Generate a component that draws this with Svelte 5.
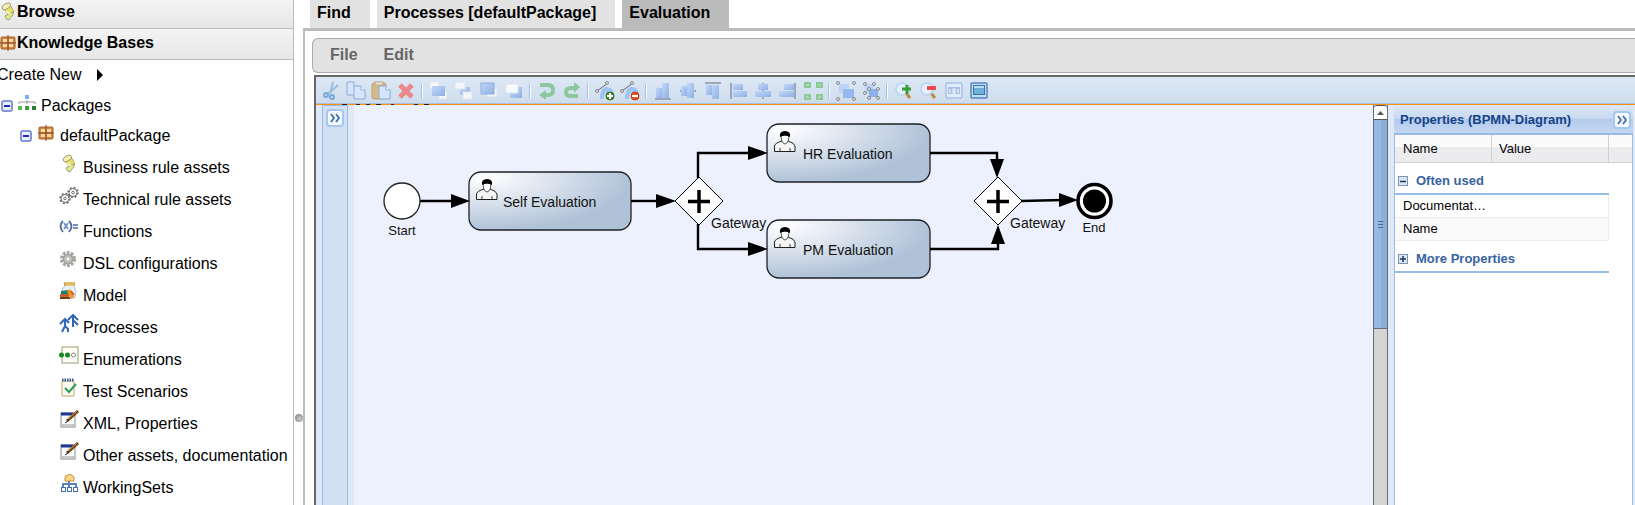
<script>
  const assets = [
    ['scroll', 'Business rule assets'],
    ['gears', 'Technical rule assets'],
    ['func', 'Functions'],
    ['gear', 'DSL configurations'],
    ['model', 'Model'],
    ['process', 'Processes'],
    ['enum', 'Enumerations'],
    ['test', 'Test Scenarios'],
    ['edit', 'XML, Properties'],
    ['edit', 'Other assets, documentation'],
    ['sets', 'WorkingSets']
  ];

  const tools = [
    ['Cut', 'Copy', 'Paste', 'Delete'],
    ['Bring to front', 'Bring forward', 'Send backward', 'Send to back'],
    ['Undo', 'Redo'],
    ['Add docker', 'Delete docker'],
    ['Align bottom', 'Align middle', 'Align top', 'Align left', 'Align center', 'Align right', 'Same size'],
    ['Group', 'Ungroup'],
    ['Zoom in', 'Zoom out', 'Zoom to standard', 'Zoom to fit']
  ];

  const tasks = [
    { x: 469, y: 172, label: 'Self Evaluation', tx: 503 },
    { x: 767, y: 124, label: 'HR Evaluation', tx: 803 },
    { x: 767, y: 220, label: 'PM Evaluation', tx: 803 }
  ];

  const flows = [
    { line: 'M420 201H456', tip: 'M451 194L470 201L451 208Z' },
    { line: 'M631 201H662', tip: 'M656 194L676 201L656 208Z' },
    { line: 'M698 178V153H754', tip: 'M748 146L768 153L748 160Z' },
    { line: 'M698 224V249H754', tip: 'M748 242L768 249L748 256Z' },
    { line: 'M930 153H997V164', tip: 'M990 159H1004L997 178Z' },
    { line: 'M930 249H998V240', tip: 'M991 244H1005L998 225Z' },
    { line: 'M1020 201L1064 200', tip: 'M1059 193L1078 200L1059 207Z' }
  ];

  const gateways = [699, 998];
</script>

{#snippet scroll()}
  <path d="M6 7L12 3L16 10L11 14Z" fill="#e9df62" stroke="#b5ab50" />
  <path d="M4 5Q6 1 11 1Q14 2 12 5L7 8Q4 8 4 5Z" fill="#f6f0b0" stroke="#9c9c78" />
  <path d="M7 14L15 10Q16 13 13 15L11 18Q8 18 7 14Z" fill="#f1e878" stroke="#88a59c" />
  <path d="M8 9L12 12" stroke="#fbf8c0" stroke-width="2" />
{/snippet}

{#snippet assetIcon(name)}
  <svg class="asset-icon" width="20" height="20" viewBox="0 0 20 20" aria-hidden="true">
    {#if name === 'scroll'}
      {@render scroll()}
    {:else if name === 'gears'}
      <g fill="none" stroke="#6c6c6c">
        <circle cx="6" cy="12.500" r="5" stroke-width="1.500" stroke-dasharray="2 1.900" />
        <circle cx="6" cy="12.500" r="4" />
        <circle cx="6" cy="12.500" r="1.300" />
        <circle cx="14" cy="6.500" r="5" stroke-width="1.500" stroke-dasharray="2 1.900" />
        <circle cx="14" cy="6.500" r="4" />
        <circle cx="14" cy="6.500" r="1.300" />
      </g>
    {:else if name === 'func'}
      <g fill="none" stroke="#4e6b9c" stroke-width="1.800">
        <path d="M4 3Q-1 8 4 14M10 3Q15 8 10 14" />
        <path d="M5 5L9 11M9 5L5 11" stroke="#6f91c4" />
        <path d="M14 7H19M14 10H19" stroke-width="1.500" />
      </g>
    {:else if name === 'gear'}
      <g fill="none" stroke="#a3a49e">
        <circle cx="9" cy="9" r="6.500" stroke-width="3" stroke-dasharray="2.700 1.400" />
        <circle cx="9" cy="9" r="4.500" fill="#dedfd8" stroke-width="2" />
        <rect x="7" y="7" width="4" height="4" fill="#fff" />
      </g>
    {:else if name === 'model'}
      <path d="M5 1H15V4Q18 9 16 16H10L3 9Q3 6 6 4Z" fill="#e8f2fc" stroke="#a9c4e2" />
      <path d="M5 2H16" stroke="#d79a22" stroke-width="3" />
      <path d="M6 2H15" stroke="#fbe08b" />
      <path d="M2 9L9 8V12H2Z" fill="#17806f" /><path d="M1 12H10V15H1Z" fill="#c95e28" /><path d="M1 15H11V17H1Z" fill="#713d19" />
      <path d="M8 9L11 7L15 15L12 17Z" fill="#f0941f" /><path d="M12 9L15 13" stroke="#cf6112" stroke-width="2" />
    {:else if name === 'process'}
      <g fill="none" stroke="#3167b8" stroke-width="2">
        <path d="M6 6V13M1 10L6 5L10 9M6 12L3 18M6 12L9 15V18" />
        <path d="M14 1V9M9 6L14 1L19 6M14 7V13M14 6L19 11" />
      </g>
    {:else if name === 'enum'}
      <rect x="3" y="1" width="16" height="16" fill="#fdfdf6" stroke="#9c9a77" />
      <circle cx="2.500" cy="9" r="2.500" fill="#178a20" /><circle cx="8.500" cy="9" r="2.500" fill="#178a20" />
      <circle cx="14.500" cy="9" r="2" fill="#fff" stroke="#858585" />
    {:else if name === 'test'}
      <rect x="3" y="3" width="12" height="15" rx="1" fill="#fdfbf0" stroke="#c2a264" />
      <path d="M3 2H15" stroke="#345a9e" stroke-width="3" stroke-dasharray="1.500 1" />
      <path d="M6 10L10 14L17 6" fill="none" stroke="#2c9d59" stroke-width="2" />
    {:else if name === 'edit'}
      <rect x="2" y="3" width="14" height="14" fill="#f7f9fb" stroke="#8d8e83" />
      <path d="M2 4H14" stroke="#1c3796" stroke-width="3" />
      <path d="M3 15H15" stroke="#c3cad0" stroke-width="2" />
      <path d="M8 11L19 1" stroke="#6d3f13" stroke-width="3" /><path d="M9 9L18 1" stroke="#e6a045" /><path d="M6 13L9 11" stroke="#222" />
    {:else if name === 'sets'}
      <path d="M6 4Q6 1 9 1L11 0L15 3V7H6Z" fill="#fbd58a" stroke="#d08f38" />
      <path d="M10 7V13M4 13V10H17V13" fill="none" stroke="#5b84bd" stroke-width="2" />
      <g fill="#fff" stroke="#426fae"><rect x="2.500" y="13.500" width="4" height="4" /><rect x="8.500" y="13.500" width="4" height="4" /><rect x="14.500" y="13.500" width="4" height="4" /></g>
    {/if}
  </svg>
{/snippet}

{#snippet crate()}
  <svg width="16" height="16" viewBox="0 0 16 16" aria-hidden="true">
    <rect x="1" y="2" width="14" height="12" rx="1" fill="#d5863f" stroke="#a3602c" />
    <path d="M3 4H7V7H3ZM9 4H13V7H9ZM3 9H7V12H3ZM9 9H13V12H9Z" fill="#fbd9a5" />
    <path d="M8 0V16M0 8H16" stroke="#7c4a2c" />
  </svg>
{/snippet}

{#snippet minus()}
  <svg width="12" height="12" viewBox="0 0 12 12" aria-hidden="true">
    <rect x="1" y="1" width="10" height="10" rx="2" fill="#e9effc" stroke="#8497d6" stroke-width="2" />
    <path d="M3 6H9" stroke="#2626bd" stroke-width="2" />
  </svg>
{/snippet}

{#snippet doc(x, y)}
  <path d="M{x} {y}H{x + 7}L{x + 11} {y + 4}V{y + 13}H{x}Z" fill="#d6e5fa" stroke="#8badde" />
  <path d="M{x + 7} {y}V{y + 4}H{x + 11}" fill="#fff" stroke="#8badde" />
{/snippet}

{#snippet dot(x, y)}
  <circle cx={x} cy={y} r="1.500" fill="#e4e4e4" stroke="#888" />
{/snippet}

{#snippet toolIcon(name)}
  <svg width="20" height="20" viewBox="0 0 20 20" aria-hidden="true">
    <defs>
      <linearGradient id="blu" x1="0" y1="0" x2="1" y2="1"><stop offset="0" stop-color="#c3d8f7" /><stop offset="1" stop-color="#8eafe6" /></linearGradient>
    </defs>
    {#if name === 'Cut'}
      <path d="M12 1L9 13M17 4L7 13" stroke="#98bbdc" stroke-width="2" />
      <g fill="none" stroke="#79a9d8" stroke-width="2"><circle cx="5" cy="14" r="2" /><circle cx="11" cy="16" r="2" /></g>
    {:else if name === 'Copy'}
      {@render doc(1, 1)}{@render doc(8, 5)}
    {:else if name === 'Paste'}
      <rect x="1" y="2" width="14" height="16" rx="2" fill="#d6b988" stroke="#c0a06c" />
      <rect x="4" y="1" width="8" height="3" fill="#f2e8cf" stroke="#b9a680" />
      {@render doc(8, 5)}
    {:else if name === 'Delete'}
      <path d="M4 4L16 16M16 4L4 16" stroke="#ea8989" stroke-width="5" />
    {:else if name === 'Bring to front'}
      <rect x="1" y="1" width="9" height="7" fill="#f4f6fa" stroke="#dde4ee" /><rect x="10" y="11" width="8" height="7" fill="#f4f6fa" stroke="#dde4ee" />
      <rect x="3" y="5" width="13" height="10" fill="url(#blu)" />
    {:else if name === 'Bring forward'}
      <rect x="6" y="6" width="10" height="8" fill="url(#blu)" />
      <rect x="1" y="1" width="10" height="7" fill="#f4f6fa" stroke="#dde4ee" /><rect x="9" y="11" width="9" height="7" fill="#f4f6fa" stroke="#dde4ee" />
    {:else if name === 'Send backward'}
      <rect x="8" y="8" width="10" height="8" fill="#f4f6fa" stroke="#dde4ee" /><rect x="2" y="2" width="13" height="11" fill="url(#blu)" stroke="#8faee0" />
    {:else if name === 'Send to back'}
      <rect x="6" y="6" width="12" height="11" fill="url(#blu)" /><rect x="2" y="3" width="12" height="9" fill="#f8f9fb" stroke="#dde4ee" />
    {:else if name === 'Undo'}
      <path d="M3 4H11Q16 4 16 9Q16 14 11 14H7" fill="none" stroke="#8cc79e" stroke-width="4" /><path d="M9 9V19L2 14Z" fill="#8cc79e" />
    {:else if name === 'Redo'}
      <path d="M16 15H9Q4 15 4 11Q4 7 9 7H12" fill="none" stroke="#8cc79e" stroke-width="4" /><path d="M12 1V12L18 6Z" fill="#8cc79e" />
    {:else if name === 'Add docker' || name === 'Delete docker'}
      <path d="M5 18Q5 8 10 6Q17 5 19 12V17H13Q14 12 12 11Q9 12 9 18Z" fill="#9dc5f4" />
      <path d="M2 10L13 2" stroke="#666" />
      {@render dot(2, 10)}{@render dot(12, 2)}
      <circle cx="15" cy="15" r="4" fill={name === 'Add docker' ? '#49892b' : '#e05420'} stroke={name === 'Add docker' ? '#356e1b' : '#c03d10'} />
      <path d={name === 'Add docker' ? 'M12 15H18M15 12V18' : 'M12 15H18'} stroke="#fff" stroke-width="2" />
    {:else if name === 'Align bottom'}
      <path d="M2 18H18" stroke="#9ba6b8" stroke-width="2" /><rect x="3" y="7" width="6" height="10" fill="url(#blu)" /><rect x="9" y="2" width="7" height="15" fill="url(#blu)" />
    {:else if name === 'Align middle'}
      <path d="M2 10H18" stroke="#9ba6b8" stroke-width="2" /><rect x="3" y="5" width="6" height="10" fill="url(#blu)" /><rect x="9" y="2" width="7" height="15" fill="url(#blu)" />
    {:else if name === 'Align top'}
      <path d="M2 2H18" stroke="#9ba6b8" stroke-width="2" /><rect x="3" y="4" width="6" height="10" fill="url(#blu)" /><rect x="9" y="4" width="7" height="14" fill="url(#blu)" />
    {:else if name === 'Align left'}
      <path d="M3 2V18" stroke="#9ba6b8" stroke-width="2" /><rect x="5" y="3" width="10" height="6" fill="url(#blu)" /><rect x="5" y="10" width="14" height="6" fill="url(#blu)" />
    {:else if name === 'Align center'}
      <path d="M10 2V18" stroke="#9ba6b8" stroke-width="2" /><rect x="5" y="3" width="10" height="6" fill="url(#blu)" /><rect x="2" y="10" width="16" height="6" fill="url(#blu)" />
    {:else if name === 'Align right'}
      <path d="M17 2V18" stroke="#9ba6b8" stroke-width="2" /><rect x="6" y="3" width="10" height="6" fill="url(#blu)" /><rect x="1" y="10" width="15" height="6" fill="url(#blu)" />
    {:else if name === 'Same size'}
      <g fill="#8bca94"><rect x="1" y="1" width="7" height="6" /><rect x="13" y="1" width="7" height="6" /><rect x="1" y="13" width="7" height="6" /><rect x="13" y="13" width="7" height="6" /></g>
      <path d="M3 5L6 3M18 5L15 3M3 15L6 17M18 15L15 17" stroke="#d0ebd3" />
    {:else if name === 'Group'}
      <rect x="3" y="3" width="10" height="9" fill="#bdd3f5" /><rect x="7" y="8" width="11" height="9" fill="#96b7eb" />
      {@render dot(2, 2)}{@render dot(18, 2)}{@render dot(2, 18)}{@render dot(18, 18)}
    {:else if name === 'Ungroup'}
      <rect x="4" y="3" width="9" height="9" fill="#bdd3f5" /><rect x="8" y="8" width="9" height="8" fill="#8db0ea" />
      {@render dot(4, 3)}{@render dot(13, 3)}{@render dot(4, 12)}{@render dot(8, 8)}{@render dot(17, 8)}{@render dot(8, 17)}{@render dot(17, 17)}
    {:else if name === 'Zoom in' || name === 'Zoom out'}
      <path d="M11 11L16 17" stroke="#c08a45" stroke-width="3" />
      <circle cx="8" cy="8" r="6" fill="#e2f0fd" stroke="#b8d3f0" stroke-width="1.500" />
      {#if name === 'Zoom in'}<path d="M13 4V13M8 8H17" stroke="#3d9c3d" stroke-width="3" />{:else}<path d="M8 7H17" stroke="#ee4a4a" stroke-width="4" />{/if}
    {:else if name === 'Zoom to standard'}
      <rect x="2" y="2" width="16" height="15" rx="1" fill="#dfeafa" stroke="#8fb0e0" /><rect x="4" y="6" width="12" height="7" fill="#a9c0e2" />
      <path d="M6 8V12M14 8V12M9 8H11V12H9Z" stroke="#fff" fill="none" />
    {:else}
      <rect x="2" y="2" width="16" height="15" rx="1" fill="#c4daf5" stroke="#5585c5" stroke-width="1.500" /><rect x="4.500" y="4.500" width="11" height="9" fill="#6fb0da" stroke="#3f719f" /><path d="M5 6H15" stroke="#b8e0f3" stroke-width="2" />
    {/if}
  </svg>
{/snippet}

{#snippet chevrons()}
  <svg width="18" height="18" viewBox="0 0 18 18" aria-hidden="true">
    <rect x="1" y="1" width="16" height="16" rx="3" fill="#f6faff" stroke="#a5c6ef" stroke-width="2" />
    <path d="M5 5L8 9L5 13M10 5L13 9L10 13" fill="none" stroke="#3d70a8" stroke-width="1.800" />
  </svg>
{/snippet}

<div class="app">
  <aside class="sidebar">
    <button class="section">
      <svg width="17" height="20" viewBox="2 0 17 20" aria-hidden="true">{@render scroll()}</svg>
      <span>Browse</span>
    </button>
    <button class="section knowledge">{@render crate()}<span>Knowledge Bases</span></button>
    <button class="create">Create New
      <svg width="6" height="12" viewBox="0 0 6 12" aria-hidden="true"><path d="M0 0L6 6L0 12Z" /></svg>
    </button>
    <div class="row root">
      {@render minus()}
      <svg class="raised" width="20" height="18" viewBox="0 0 20 18" aria-hidden="true">
        <rect x="8" y="1" width="4" height="4" fill="#78b2f0" /><path d="M10 6V10M2 10V8H18V10" fill="none" stroke="#999" />
        <rect x="1" y="12" width="4" height="4" fill="#58b955" /><rect x="8" y="12" width="4" height="4" fill="#3fa03c" /><rect x="15" y="12" width="4" height="4" fill="#25822a" />
      </svg>
      <span>Packages</span>
    </div>
    <div class="row package">
      {@render minus()}
      <span class="raised crate">{@render crate()}</span>
      <span>defaultPackage</span>
    </div>
    <ul>
      {#each assets as [icon, label]}
        <li>{@render assetIcon(icon)}<span>{label}</span></li>
      {/each}
    </ul>
  </aside>

  <div class="splitter"><i></i></div>

  <main>
    <nav class="tabs">
      <button>Find</button>
      <button>Processes [defaultPackage]</button>
      <button class="active">Evaluation</button>
    </nav>
    <div class="content">
      <div class="menu"><button>File</button><button>Edit</button></div>
      <section class="editor">
        <div class="toolbar">
          {#each tools as group, g}
            {#if g > 0}<span class="sep"></span>{/if}
            {#each group as tool}
              <button aria-label={tool}>{@render toolIcon(tool)}</button>
            {/each}
          {/each}
          <svg class="cut-line" width="92" height="1" viewBox="0 0 92 1" aria-hidden="true">
            <path d="M0 .5H5M14 .5H18M24 .5H28M34 .5H39M49 .5H52M72 .5H76M82 .5H87" stroke="#222" />
          </svg>
        </div>
        <div class="workspace">
          <div class="repository"><button aria-label="Expand shape repository">{@render chevrons()}</button></div>
          <div class="canvas">
            <svg width="780" height="380" viewBox="354 105 780 380" role="img" aria-label="Evaluation process">
              <defs>
                <radialGradient id="task" cx="0.1" cy="0.1" r="0.9">
                  <stop offset="0" stop-color="#fff" /><stop offset="1" stop-color="#b0c2d8" />
                </radialGradient>
              </defs>
              {#each tasks as t}
                <rect x={t.x} y={t.y} width={t.x === 469 ? 162 : 163} height="58" rx="12" fill="url(#task)" stroke="#1c2026" stroke-width="1.300" />
                <g transform="translate({t.x + 7} {t.y + 7})">
                  <path d="M.5 20.500V15Q1 12 8 10V9H14V10Q20.500 12 21 15V20.500Z" fill="#f4f4f4" stroke="#222" />
                  <path d="M6 17V20M16 17V20" stroke="#444" />
                  <path d="M7 4Q7 10 9 12Q11 14 13 12Q15 10 15 4Z" fill="#fff" stroke="#333" stroke-width=".8" />
                  <path d="M6 6Q5 0 11 0Q17 0 16 6Q11 3 6 6Z" fill="#000" />
                </g>
                <text class="task-label" x={t.tx} y={t.y + 35}>{t.label}</text>
              {/each}
              {#each flows as f}
                <path d={f.line} fill="none" stroke="#000" stroke-width="2.400" />
                <path d={f.tip} />
              {/each}
              {#each gateways as x}
                <path d="M{x - 24} 201L{x} 177L{x + 24} 201L{x} 225Z" fill="#fff" stroke="#000" />
                <path d="M{x - 11} 201.500H{x + 11}M{x} 190V213" stroke="#000" stroke-width="3.500" />
                <text class="task-label" x={x + 12} y="228">Gateway</text>
              {/each}
              <circle cx="402" cy="201" r="18" fill="#fff" stroke="#222" stroke-width="1.300" />
              <text class="event-label" x="402" y="235">Start</text>
              <circle cx="1094.500" cy="201" r="16.500" fill="#fff" stroke="#000" stroke-width="3.600" />
              <circle cx="1094.500" cy="201" r="11.500" />
              <text class="event-label" x="1094" y="232">End</text>
            </svg>
          </div>
          <div class="scrollbar">
            <button aria-label="Scroll up"><svg width="7" height="4" viewBox="0 0 7 4" aria-hidden="true"><path d="M0 4L3.500 0L7 4Z" fill="#555" /></svg></button>
            <div class="thumb"><i></i></div>
          </div>
          <aside class="properties">
            <header><h2>Properties (BPMN-Diagram)</h2><button aria-label="Collapse properties">{@render chevrons()}</button></header>
            <div class="panel">
              <table>
                <thead><tr><th>Name</th><th>Value</th><th></th></tr></thead>
                <tbody>
                  <tr class="group">
                    <th colspan="2"><button>
                      <svg width="10" height="10" viewBox="0 0 10 10" aria-hidden="true"><rect x=".5" y=".5" width="9" height="9" fill="#dbe5f2" stroke="#7d93b2" /><path d="M2 5.500H8" stroke="#1f3a66" stroke-width="1.500" /></svg>
                      Often used</button></th><td></td>
                  </tr>
                  <tr class="item"><td>Documentat…</td><td></td><td></td></tr>
                  <tr class="item alt"><td>Name</td><td></td><td></td></tr>
                  <tr class="group">
                    <th colspan="2"><button>
                      <svg width="10" height="10" viewBox="0 0 10 10" aria-hidden="true"><rect x=".5" y=".5" width="9" height="9" fill="#dbe5f2" stroke="#7d93b2" /><path d="M2 5H8M5 2V8" stroke="#1f3a66" stroke-width="1.500" /></svg>
                      More Properties</button></th><td></td>
                  </tr>
                </tbody>
              </table>
            </div>
          </aside>
        </div>
      </section>
    </div>
  </main>
</div>

<style>
  :global(body) { background: #fff; overflow: hidden; }
  * { box-sizing: border-box; }
  svg { display: block; flex: none; }
  button { font: inherit; color: inherit; background: none; border: 0; padding: 0; margin: 0; text-align: left; display: flex; align-items: center; }
  .app { display: flex; height: 100vh; font: 16px/20px "Liberation Sans", Arial, sans-serif; color: #000; }

  .sidebar { width: 294px; flex: none; overflow: hidden; border-right: 1px solid #bbb; }
  .section { width: 100%; height: 29px; padding-bottom: 4px; border-bottom: 1px solid #bbb; background: linear-gradient(#f4f4f4, #e6e6e6); font-weight: bold; }
  .section.knowledge { height: 31px; padding-bottom: 2px; gap: 1px; }
  .create { height: 31px; gap: 16px; margin-left: -3px; padding-bottom: 2px; }
  .row { display: flex; align-items: center; height: 30px; }
  .root { padding-left: 1px; gap: 4px; }
  .root .raised { margin-bottom: 6px; }
  .package { padding-left: 20px; gap: 6px; }
  .crate { margin-bottom: 6px; }
  ul { list-style: none; margin: 0; padding: 1px 0 0 59px; }
  li { display: flex; align-items: center; gap: 4px; height: 32px; }
  .asset-icon { margin-bottom: 9px; }

  .splitter { width: 9px; flex: none; padding: 414px 0 0 1px; }
  .splitter i { display: block; width: 8px; height: 8px; border-radius: 50%; background: radial-gradient(circle at 60% 60%, #ccc, #777); }

  main { flex: 1; min-width: 0; display: flex; flex-direction: column; }
  .tabs { display: flex; gap: 7px; padding-left: 7px; font-weight: bold; }
  .tabs button { height: 28px; padding: 0 19px 2px 7px; background: #e2e2e2; }
  .tabs .active { background: #bbb; }
  .content { flex: 1; min-height: 0; display: flex; flex-direction: column; border: solid #bbb; border-width: 3px 0 0 2px; padding: 7px 0 0 7px; }
  .menu { display: flex; gap: 26px; height: 35px; flex: none; padding: 0 17px 2px; border: 1px solid #aaa; border-right: 0; border-radius: 6px 0 0 6px; background: #e2e2e2; color: #666; font-weight: bold; }
  .editor { flex: 1; min-height: 0; display: flex; flex-direction: column; margin: 2px 0 0 2px; border: solid #666; border-width: 2px 0 0 2px; }
  .toolbar { position: relative; display: flex; align-items: center; height: 28px; flex: none; padding: 0 2px; border-bottom: 1px solid #ff8f0e; background: linear-gradient(#dde8f5, #cddcec); box-shadow: inset 0 -1px #a9bfdb; }
  .toolbar button { width: 25px; justify-content: center; }
  .sep { width: 2px; height: 15px; margin: 0 3px; background: linear-gradient(90deg, #9dbfe8 50%, #fff 50%); }
  .cut-line { position: absolute; left: 26px; bottom: -1px; }

  .workspace { flex: 1; min-height: 0; display: flex; background: #dfe8f6; }
  .repository { width: 26px; flex: none; margin: 0 6px; padding: 3px 0 0 3px; border: solid #99bbe8; border-width: 1px 1px 0; background: #d2e0f2; }
  .canvas { flex: 1; min-width: 0; overflow: hidden; background: #edf1fe; }
  .canvas text { font-family: "Liberation Sans", Arial, sans-serif; fill: #111; }
  .task-label { font-size: 14px; }
  .event-label { font-size: 13px; text-anchor: middle; }
  .scrollbar { width: 15px; flex: none; border: solid #666e7a; border-width: 0 1px; background: #d5d4d2; }
  .scrollbar button { width: 13px; height: 15px; justify-content: center; border: solid #555; border-width: 1px 0; border-radius: 3px 3px 0 0; background: #fff; }
  .thumb { display: flex; align-items: center; justify-content: center; height: 209px; border-bottom: 1px solid #666e7a; background: linear-gradient(90deg, #98b9e6 55%, #8dadd9 55%); }
  .thumb i { width: 5px; height: 7px; border: solid #4c6688; border-width: 1px 0; background: linear-gradient(transparent 2px, #4c6688 2px 3px, transparent 3px); }

  .properties { width: 247px; flex: none; padding: 0 2px 0 6px; display: flex; flex-direction: column; font-size: 13px; line-height: 16px; }
  .properties header { display: flex; align-items: center; justify-content: space-between; height: 30px; padding: 1px 2px 0 6px; border-bottom: 2px solid #99bbe8; background: linear-gradient(#dbe7f6, #c8d9f0 48%, #b3cbec 50%, #c5d8f2); }
  h2 { margin: 0; font-size: 13px; color: #15428b; }
  .panel { flex: 1; border: solid #99bbe8; border-width: 0 1px; background: #fff; }
  table { width: 100%; table-layout: fixed; border-spacing: 0; }
  th, td { padding: 0; text-align: left; font-weight: normal; }
  thead th { height: 28px; padding: 1px 0 0 8px; border: solid #d0d0d0; border-width: 0 1px 1px 0; background: linear-gradient(#fafafa 45%, #ebecee 46%, #ececee); }
  thead th:nth-child(1) { width: 97px; }
  thead th:nth-child(2) { width: 117px; padding-left: 7px; }
  thead th:nth-child(3) { border-right: 0; padding: 0; }
  .group th { height: 32px; padding: 6px 0 0 3px; border-bottom: 2px solid #99bbe8; color: #3764a0; font-weight: bold; }
  .group button { gap: 8px; }
  .item td { height: 23px; border-bottom: 1px solid #ededed; }
  .item td:first-child { padding-left: 8px; }
  .item td:nth-child(2) { border-right: 1px solid #ededed; }
  .item td:last-child { border: 0; }
  .alt td:not(:last-child) { background: #fafafa; }
</style>
